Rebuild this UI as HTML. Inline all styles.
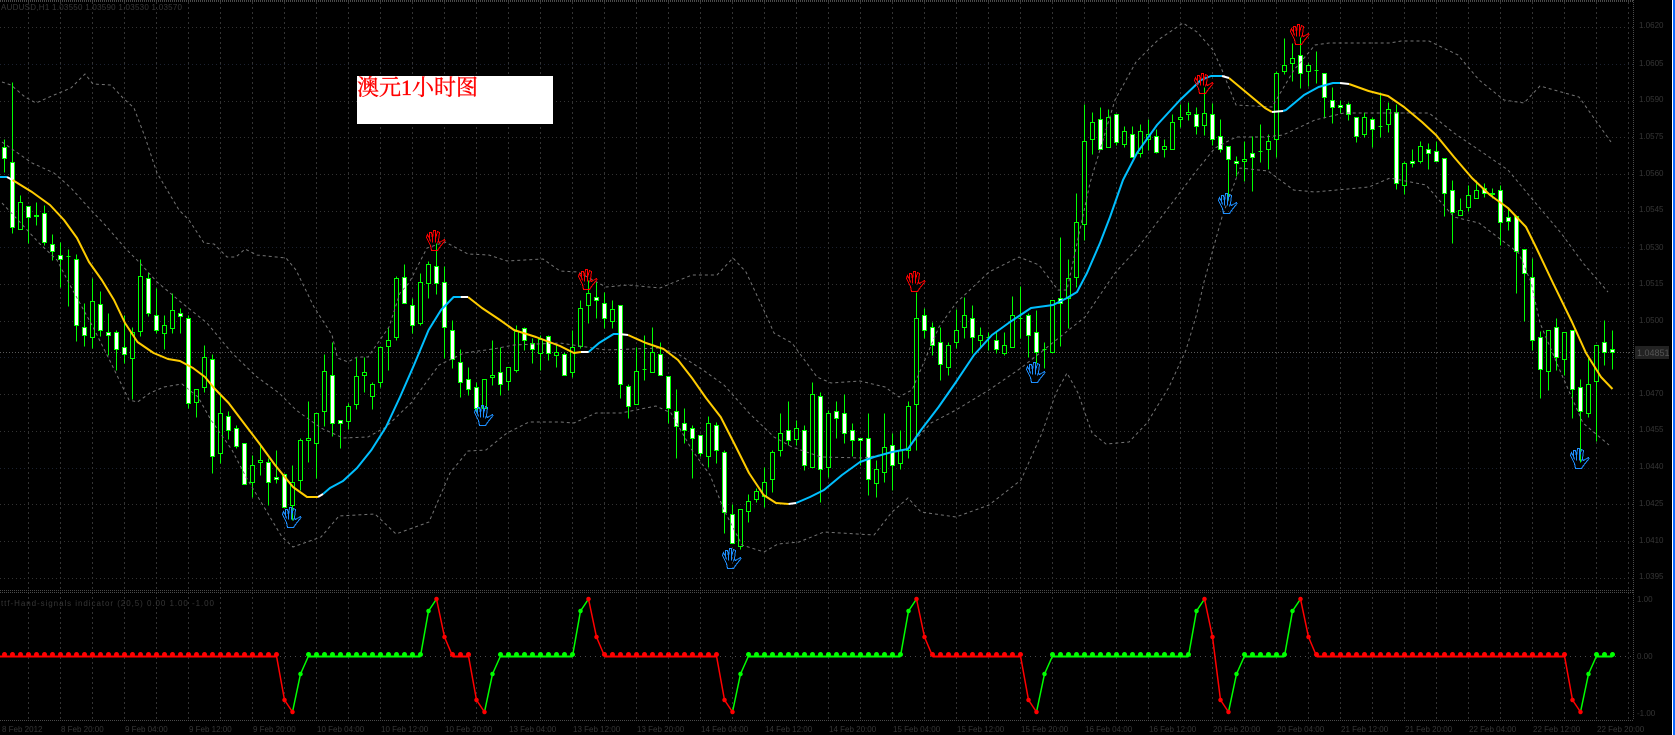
<!DOCTYPE html>
<html lang="zh">
<head>
<meta charset="utf-8">
<title>澳元1小时图</title>
<style>
html,body{margin:0;padding:0;background:#000;width:1675px;height:735px;overflow:hidden}
svg{position:absolute;left:0;top:0;display:block}
.t{font-family:"Liberation Sans",sans-serif;font-size:8px;fill:#363636}
#box{position:absolute;left:357px;top:76px;width:196px;height:48px;background:#fff;color:#f00;font-family:"Liberation Serif","Noto Serif CJK SC",serif;font-size:22px;line-height:24px;white-space:nowrap;padding-left:0;-webkit-text-stroke:.35px #f00}
#edge{position:absolute;left:1672px;top:0;width:1px;height:735px;background:#fff}
#edge2{position:absolute;left:1673px;top:0;width:2px;height:735px;background:#0f6cff}
</style>
</head>
<body>
<svg width="1675" height="735" viewBox="0 0 1675 735" xmlns="http://www.w3.org/2000/svg">
<defs>
<g id="hand" fill="none" stroke-width="1" stroke-linejoin="miter">
<path d="M5.5 20.5L4.5 15.5L.5 7.5L1.5 4.5L3.5 8.5L3.5 2.5L5.5 2.5L6.5 8.5L7.5 .5L9.5 .5L9.5 8.5L11.5 1.5L13.5 2.5L12.5 10.5L13.5 12.5L18.5 9.5L19 10.5L13.5 17.5L11.5 20.5Z"/>
<path d="M3.5 8.5L4.5 11.5M6.5 8.5L6.5 12.5M9.5 8.5L9.5 12.5M12.5 10.5L11.5 13.5"/>
</g>
</defs>

<!-- grid -->
<g stroke="#333333" stroke-width="1" fill="none" stroke-dasharray="1 3" shape-rendering="crispEdges">
<path d="M0 27.5H1633M0 101.5H1633M0 137.5H1633M0 174.5H1633M0 211.5H1633M0 284.5H1633M0 321.5H1633M0 394.5H1633M0 431.5H1633M0 504.5H1633M0 541.5H1633M0 578.5H1633"/>
<path stroke="#1c2230" d="M0 64.5H1633M0 247.5H1633M0 468.5H1633M0 357.5H1633"/>
</g>
<g stroke="#333333" stroke-width="1" fill="none" stroke-dasharray="2 3" shape-rendering="crispEdges">
<path d="M28.5 2V720M60.5 2V720M92.5 2V720M124.5 2V720M156.5 2V720M188.5 2V720M220.5 2V720M252.5 2V720M284.5 2V720M316.5 2V720M348.5 2V720M380.5 2V720M412.5 2V720M444.5 2V720M476.5 2V720M508.5 2V720M540.5 2V720M572.5 2V720M604.5 2V720M636.5 2V720M668.5 2V720M700.5 2V720M732.5 2V720M764.5 2V720M796.5 2V720M828.5 2V720M860.5 2V720M892.5 2V720M924.5 2V720M956.5 2V720M988.5 2V720M1020.5 2V720M1052.5 2V720M1084.5 2V720M1116.5 2V720M1148.5 2V720M1180.5 2V720M1212.5 2V720M1244.5 2V720M1276.5 2V720M1308.5 2V720M1340.5 2V720M1372.5 2V720M1404.5 2V720M1436.5 2V720M1468.5 2V720M1500.5 2V720M1532.5 2V720M1564.5 2V720M1596.5 2V720M1628.5 2V720"/>
</g>
<g stroke="#4a4a4a" stroke-width="1" fill="none" stroke-dasharray="1 1" shape-rendering="crispEdges">
<path d="M0 .5H1633M0 1.5H1633M0 590.5H1633M0 592.5H1633M0 720.5H1633M1633.5 0V720"/>
</g>
<path d="M0 352.5H1633" stroke="#5a5a5a" stroke-width="1" stroke-dasharray="1 2" shape-rendering="crispEdges"/>
<path d="M0 656.5H1633" stroke="#4a4a4a" stroke-width="1" stroke-dasharray="1 4" shape-rendering="crispEdges"/>

<!-- candles -->
<g transform="translate(0,.5)" shape-rendering="crispEdges" stroke="#00ff00" stroke-width="1">
<path fill="none" d="M4.5 139V172M12.5 82V233M20.5 195V229M28.5 206V243M36.5 202V225M44.5 205V245M52.5 234V260M60.5 242V287M68.5 249V306M76.5 254V341M84.5 303V346M92.5 278V348M100.5 291V336M108.5 313V355M116.5 330V370M124.5 315V363M132.5 327V399M140.5 259V336M148.5 272V316M156.5 288V333M164.5 315V349M172.5 293V333M180.5 308V333M188.5 315V408M196.5 389V417M204.5 345V392M212.5 354V473M220.5 395V463M228.5 411V439M236.5 425V448M244.5 443V484M252.5 455V497M260.5 443V475M268.5 458V505M276.5 450V483M284.5 474V507M292.5 465V520M300.5 438V490M308.5 401V462M316.5 413V478M324.5 354V426M332.5 342V436M340.5 420V448M348.5 403V429M356.5 357V409M364.5 357V392M372.5 382V409M380.5 346V387M388.5 327V370M396.5 276V340M404.5 264V303M412.5 298V333M420.5 273V325M428.5 261V298M436.5 243V294M444.5 266V358M452.5 320V368M460.5 349V397M468.5 367V395M476.5 382V412M484.5 379V410M492.5 340V385M500.5 347V395M508.5 367V390M516.5 325V372M524.5 327V350M532.5 338V363M540.5 335V370M548.5 335V360M556.5 345V367M564.5 352V375M572.5 330V377M580.5 300V348M588.5 280V323M596.5 282V318M604.5 292V328M612.5 300V328M620.5 305V398M628.5 384V418M636.5 347V404M644.5 335V380M652.5 327V372M660.5 342V375M668.5 376V423M676.5 389V458M684.5 408V443M692.5 425V478M700.5 435V456M708.5 416V467M716.5 422V463M724.5 450V533M732.5 504V543M740.5 509V549M748.5 494V522M756.5 488V502M764.5 467V507M772.5 450V492M780.5 413V456M788.5 401V445M796.5 420V445M804.5 425V470M812.5 382V467M820.5 392V502M828.5 410V477M836.5 401V438M844.5 394V443M852.5 423V456M860.5 438V465M868.5 413V495M876.5 460V497M884.5 413V482M892.5 433V490M900.5 430V469M908.5 401V458M916.5 292V450M924.5 308V338M932.5 322V355M940.5 327V380M948.5 342V375M956.5 309V348M964.5 297V338M972.5 305V353M980.5 327V347M988.5 332V350M996.5 332V353M1004.5 332V355M1012.5 296V347M1020.5 286V338M1028.5 313V357M1036.5 310V363M1044.5 342V368M1052.5 300V352M1060.5 237V346M1068.5 259V328M1076.5 193V287M1084.5 104V240M1092.5 112V154M1100.5 107V149M1108.5 109V147M1116.5 114V145M1124.5 126V147M1132.5 126V157M1140.5 124V157M1148.5 119V150M1156.5 129V153M1164.5 139V157M1172.5 114V149M1180.5 104V127M1188.5 102V120M1196.5 107V134M1204.5 87V135M1212.5 103V145M1220.5 119V152M1228.5 146V200M1236.5 156V176M1244.5 141V181M1252.5 136V191M1260.5 124V162M1268.5 134V169M1276.5 71V157M1284.5 38V74M1292.5 43V81M1300.5 37V88M1308.5 63V86M1316.5 51V83M1324.5 73V118M1332.5 87V123M1340.5 100V113M1348.5 102V120M1356.5 117V142M1364.5 112V137M1372.5 117V147M1380.5 92V137M1388.5 102V132M1396.5 104V189M1404.5 161V194M1412.5 149V167M1420.5 141V163M1428.5 143V169M1436.5 141V161M1444.5 158V216M1452.5 180V243M1460.5 198V215M1468.5 185V211M1476.5 180V198M1484.5 183V197M1492.5 188V198M1500.5 185V245M1508.5 208V230M1516.5 216V293M1524.5 249V321M1532.5 258V350M1540.5 331V398M1548.5 330V390M1556.5 318V370M1564.5 332V375M1572.5 330V418M1580.5 379V462M1588.5 358V417M1596.5 345V441M1604.5 320V365M1612.5 330V369"/>
<path fill="#000" d="M18.5 202h4V229h-4zM34.5 215h4V216h-4zM66.5 256h4V256h-4zM90.5 301h4V337h-4zM130.5 332h4V358h-4zM138.5 276h4V331h-4zM162.5 325h4V333h-4zM170.5 310h4V328h-4zM194.5 389h4V402h-4zM202.5 357h4V387h-4zM218.5 413h4V453h-4zM250.5 465h4V482h-4zM258.5 460h4V462h-4zM290.5 482h4V505h-4zM298.5 440h4V480h-4zM306.5 438h4V440h-4zM314.5 413h4V443h-4zM322.5 371h4V411h-4zM346.5 406h4V421h-4zM354.5 376h4V404h-4zM362.5 372h4V375h-4zM370.5 384h4V396h-4zM378.5 347h4V382h-4zM386.5 340h4V346h-4zM394.5 278h4V337h-4zM418.5 282h4V323h-4zM426.5 264h4V283h-4zM482.5 379h4V408h-4zM490.5 375h4V377h-4zM506.5 367h4V381h-4zM514.5 331h4V370h-4zM538.5 339h4V353h-4zM554.5 352h4V355h-4zM570.5 347h4V372h-4zM578.5 308h4V346h-4zM586.5 293h4V305h-4zM610.5 309h4V321h-4zM634.5 371h4V404h-4zM642.5 369h4V369h-4zM650.5 352h4V372h-4zM706.5 423h4V456h-4zM738.5 509h4V546h-4zM746.5 501h4V511h-4zM754.5 491h4V499h-4zM762.5 482h4V496h-4zM770.5 452h4V479h-4zM778.5 433h4V450h-4zM794.5 428h4V439h-4zM810.5 394h4V467h-4zM826.5 413h4V467h-4zM874.5 469h4V483h-4zM882.5 447h4V472h-4zM898.5 450h4V463h-4zM906.5 406h4V450h-4zM914.5 318h4V404h-4zM946.5 345h4V367h-4zM954.5 330h4V342h-4zM962.5 315h4V327h-4zM978.5 335h4V340h-4zM986.5 337h4V337h-4zM1002.5 345h4V353h-4zM1010.5 315h4V347h-4zM1018.5 318h4V318h-4zM1042.5 349h4V349h-4zM1050.5 300h4V352h-4zM1066.5 278h4V298h-4zM1074.5 222h4V277h-4zM1082.5 141h4V224h-4zM1090.5 122h4V139h-4zM1106.5 117h4V147h-4zM1122.5 131h4V144h-4zM1138.5 131h4V153h-4zM1146.5 134h4V139h-4zM1162.5 146h4V149h-4zM1170.5 122h4V149h-4zM1178.5 117h4V119h-4zM1186.5 112h4V114h-4zM1202.5 113h4V125h-4zM1242.5 159h4V161h-4zM1258.5 151h4V151h-4zM1266.5 141h4V149h-4zM1274.5 73h4V139h-4zM1282.5 65h4V71h-4zM1290.5 58h4V63h-4zM1306.5 65h4V71h-4zM1314.5 70h4V70h-4zM1362.5 117h4V134h-4zM1378.5 126h4V126h-4zM1386.5 109h4V124h-4zM1402.5 163h4V185h-4zM1418.5 146h4V161h-4zM1458.5 210h4V215h-4zM1466.5 195h4V207h-4zM1474.5 190h4V198h-4zM1490.5 193h4V194h-4zM1546.5 330h4V371h-4zM1562.5 332h4V359h-4zM1586.5 384h4V413h-4zM1594.5 345h4V381h-4z"/>
<path fill="#fff" d="M2.5 147h4V158h-4zM10.5 162h4V227h-4zM26.5 206h4V217h-4zM42.5 213h4V242h-4zM50.5 244h4V251h-4zM58.5 255h4V259h-4zM74.5 259h4V325h-4zM82.5 327h4V335h-4zM98.5 304h4V330h-4zM106.5 332h4V335h-4zM114.5 332h4V349h-4zM122.5 347h4V354h-4zM146.5 278h4V313h-4zM154.5 315h4V330h-4zM178.5 313h4V316h-4zM186.5 318h4V403h-4zM210.5 359h4V456h-4zM226.5 416h4V430h-4zM234.5 428h4V446h-4zM242.5 443h4V484h-4zM266.5 462h4V482h-4zM274.5 477h4V479h-4zM282.5 474h4V507h-4zM330.5 375h4V423h-4zM338.5 420h4V423h-4zM402.5 277h4V303h-4zM410.5 305h4V325h-4zM434.5 266h4V283h-4zM442.5 282h4V327h-4zM450.5 330h4V359h-4zM458.5 362h4V382h-4zM466.5 379h4V389h-4zM474.5 387h4V408h-4zM498.5 372h4V384h-4zM522.5 328h4V340h-4zM530.5 343h4V349h-4zM546.5 336h4V353h-4zM562.5 354h4V375h-4zM594.5 297h4V300h-4zM602.5 303h4V318h-4zM618.5 305h4V384h-4zM626.5 386h4V406h-4zM658.5 354h4V375h-4zM666.5 376h4V408h-4zM674.5 411h4V426h-4zM682.5 423h4V430h-4zM690.5 428h4V438h-4zM698.5 435h4V453h-4zM714.5 425h4V450h-4zM722.5 452h4V512h-4zM730.5 514h4V543h-4zM786.5 430h4V440h-4zM802.5 430h4V465h-4zM818.5 396h4V469h-4zM834.5 411h4V418h-4zM842.5 413h4V433h-4zM850.5 430h4V440h-4zM858.5 438h4V440h-4zM866.5 438h4V479h-4zM890.5 445h4V465h-4zM922.5 315h4V330h-4zM930.5 327h4V345h-4zM938.5 342h4V364h-4zM970.5 318h4V337h-4zM994.5 340h4V349h-4zM1026.5 315h4V335h-4zM1034.5 332h4V352h-4zM1058.5 298h4V303h-4zM1098.5 119h4V149h-4zM1114.5 114h4V142h-4zM1130.5 134h4V157h-4zM1154.5 136h4V152h-4zM1194.5 114h4V126h-4zM1210.5 114h4V139h-4zM1218.5 136h4V149h-4zM1226.5 146h4V159h-4zM1234.5 161h4V163h-4zM1250.5 153h4V157h-4zM1298.5 55h4V73h-4zM1322.5 73h4V97h-4zM1330.5 100h4V107h-4zM1338.5 105h4V107h-4zM1346.5 104h4V114h-4zM1354.5 117h4V136h-4zM1370.5 119h4V129h-4zM1394.5 112h4V183h-4zM1410.5 161h4V163h-4zM1426.5 149h4V153h-4zM1434.5 151h4V161h-4zM1442.5 158h4V193h-4zM1450.5 190h4V212h-4zM1482.5 188h4V193h-4zM1498.5 190h4V222h-4zM1506.5 217h4V221h-4zM1514.5 216h4V251h-4zM1522.5 249h4V273h-4zM1530.5 277h4V340h-4zM1538.5 337h4V369h-4zM1554.5 327h4V357h-4zM1570.5 330h4V389h-4zM1578.5 387h4V411h-4zM1602.5 342h4V352h-4zM1610.5 349h4V352h-4z"/>
</g>

<!-- Bollinger bands -->
<g fill="none" stroke="#747474" stroke-width="1" stroke-dasharray="3 3">
<polyline points="2,82 11,85 25,97 36,103 54,95 71,88 85,74 93,84 111,85 123,98 134,108 145,137 157,173 179,210 189,220 204,243 214,244 227,257 236,257 245,249 257,255 286,258 296,270 314,307 332,335 337.5,358 348,362 357,357 368,357 389,327 400,293 409,283 427,248 445,242 468,254 489,255 507,261 543,259 560,271 578,272 606,287 628,285 660,288 692,275 717,275 733,258 746,272 767,317 774,333 792,343 817,377 831,383 860,381 885,387 899,397 912,390 939,327 956,303 989,272 1019,257 1039,265 1058,290 1067,290 1090,183 1115,100 1136,62 1158,40 1183,23 1197,32 1213,50 1222,70 1236,105 1272,107 1294,70 1315,45 1329,43 1390,43 1401,41 1429,41 1458,55 1479,80 1504,100 1524,103 1540,86 1579,97 1611,142"/>
<polyline points="2,142 32,163 54,173 71,188 89,208 107,227 125,248 139,262 157,282 182,303 207,323 232,353 257,377 279,393 296,410 321,428 343,438 368,437 386,427 411,403 439,365 464,353 493,349 514,345 560,343 606,350 660,348 678,354 703,370 724,385 749,413 774,437 792,447 821,457 864,458 906,450 931,423 956,410 989,390 1021,368 1060,337 1085,317 1115,273 1136,250 1169,207 1197,170 1215,148 1236,137 1265,137 1283,135 1315,120 1344,113 1394,113 1429,113 1454,133 1479,150 1508,170 1533,200 1561,233 1583,263 1608,292"/>
<polyline points="2,203 18,220 39,243 57,260 71,287 93,327 111,363 129,400 137.5,402 150,393 164,387 182,384 198,397 211,420 232,450 246,477 264,507 282,537 293,547 321,537 339,516 375,514 396,534 429,522 450,473 468,451 486,450 507,433 529,422 560,422 574,423 596,413 621,413 656,406 671,413 692,450 710,475 724,510 742,545 764,552 778,544 799,542 824,532 874,535 892,512 908,498 921,512 956,517 989,505 1021,480 1042,433 1056,393 1067,373 1078,393 1092,433 1106,444 1129,442 1147,423 1169,387 1186,350 1197,313 1204,282 1222,217 1240,168 1268,171 1293.6,190 1315,192 1369,187 1390,178 1426,185 1454,217 1479,223 1518.6,253 1531,282 1540,323 1561,373 1583,423 1609,445"/>
</g>

<!-- MA line -->
<g fill="none" stroke-width="2" stroke-linejoin="round">
<g stroke="#00bfff">
<polyline points="0,177 7,177"/>
<polyline points="323,494 330,488 343,481 357,468 371.4,450 386,427 400,397 414,365 428.6,330 441,310 453.6,297 460.7,297"/>
<polyline points="588.6,352 599,343 613.6,334 619,334"/>
<polyline points="796,503 810,497 824,490 842,475 860,462 874,457 892,452 908,449 921,430 938.6,407 956,382 974,355 992,335 1010,322 1031,308 1053,305 1067,298 1077,292 1087,273 1100,243 1110,217 1123,180 1137,153 1157,125 1180,100 1201,80 1211,76 1222,76"/>
<polyline points="1283,111 1286,110 1304,95 1318.6,87 1333,83 1340,83"/>
</g>
<g stroke="#ffcc00">
<polyline points="12.5,180 32,192 50,205 64,220 77,238 89,262 101.8,280 114,300 125,323 137.5,342 153.6,353 168,359 180,361 193,368 205,377 214,388 228.6,403 243,422 259,443 275,465 293,487 307,497 318,497"/>
<polyline points="468,297 482,308 500,320 514,330 536,337 560,346 574,353 581,352"/>
<polyline points="628,335 646,343 663.6,349 678,360 692,378 706,398 720.7,417 735,445 749,473 763.6,495 776,503 788.6,504"/>
<polyline points="1229,78 1247,93 1265,108 1272,112"/>
<polyline points="1349,84 1368.6,91 1388,96 1404,107 1422,122 1436,135 1454,157 1472,178 1490,195 1508,208 1526,227 1536.4,248 1552.5,282 1572,322 1586,353 1601,377 1612.5,389"/>
</g>
<g stroke="#ffffff">
<polyline points="7,177 12.5,180"/><polyline points="318,497 323,494"/><polyline points="460.7,297 468,297"/><polyline points="581,352 588.6,352"/><polyline points="619,334 628,335"/><polyline points="788.6,504 796,503"/><polyline points="1222,76 1229,78"/><polyline points="1272,112 1283,111"/><polyline points="1340,83 1349,84"/>
</g>
</g>

<!-- hands -->
<g shape-rendering="crispEdges" stroke="#ff0000">
<use href="#hand" x="426" y="230"/><use href="#hand" x="578" y="269"/><use href="#hand" x="906" y="271"/><use href="#hand" x="1194" y="73"/><use href="#hand" x="1290" y="24"/>
</g>
<g shape-rendering="crispEdges" stroke="#1e8fff">
<use href="#hand" x="282" y="507"/><use href="#hand" x="474" y="405"/><use href="#hand" x="722" y="548"/><use href="#hand" x="1026" y="362"/><use href="#hand" x="1218" y="193"/><use href="#hand" x="1570" y="448"/>
</g>

<!-- sub-window indicator -->
<g fill="none" stroke-width="1.5" stroke-linejoin="round">
<path stroke="#ff0000" stroke-width="2" d="M0 656.5H276.5M452.5 656.5H468.5M604.5 656.5H716.5M932.5 656.5H1020.5M1316.5 656.5H1564.5"/>
<path stroke="#00ff00" stroke-width="2" d="M308.5 656.5H420.5M500.5 656.5H572.5M748.5 656.5H900.5M1052.5 656.5H1188.5M1244.5 656.5H1284.5M1596.5 656.5H1612.5"/>
<path stroke="#ff0000" d="M276.5 656L284.5 700L292.5 712M436.5 599L444.5 637L452.5 656M468.5 656L476.5 700L484.5 712M588.5 599L596.5 637L604.5 656M716.5 656L724.5 700L732.5 712M916.5 599L924.5 637L932.5 656M1020.5 656L1028.5 700L1036.5 712M1204.5 599L1212.5 637L1220.5 700L1228.5 712M1300.5 599L1308.5 637L1316.5 656M1564.5 656L1572.5 700L1580.5 712"/>
<path stroke="#00ff00" d="M292.5 712L300.5 674L308.5 656M420.5 656L428.5 611L436.5 599M484.5 712L492.5 674L500.5 656M572.5 656L580.5 611L588.5 599M732.5 712L740.5 674L748.5 656M900.5 656L908.5 611L916.5 599M1036.5 712L1044.5 674L1052.5 656M1188.5 656L1196.5 611L1204.5 599M1228.5 712L1236.5 674L1244.5 656M1284.5 656L1292.5 611L1300.5 599M1580.5 712L1588.5 674L1596.5 656"/>
</g>
<g fill="none" stroke-width="5" stroke-linecap="round">
<path stroke="#ff0000" stroke-dasharray="0 8" d="M4.5 654.5H277M452.5 654.5H469M604.5 654.5H717M932.5 654.5H1021M1316.5 654.5H1565"/>
<path stroke="#00ff00" stroke-dasharray="0 8" d="M308.5 654.5H421M500.5 654.5H573M748.5 654.5H901M1052.5 654.5H1189M1244.5 654.5H1285M1596.5 654.5H1613"/>
<path stroke="#ff0000" stroke-width="4.5" d="M284.5 700h0M292.5 712h0M436.5 599h0M444.5 637h0M476.5 700h0M484.5 712h0M588.5 599h0M596.5 637h0M724.5 700h0M732.5 712h0M916.5 599h0M924.5 637h0M1028.5 700h0M1036.5 712h0M1204.5 599h0M1212.5 637h0M1220.5 700h0M1228.5 712h0M1300.5 599h0M1308.5 637h0M1572.5 700h0M1580.5 712h0"/>
<path stroke="#00ff00" stroke-width="4.5" d="M300.5 674h0M428.5 611h0M492.5 674h0M580.5 611h0M740.5 674h0M908.5 611h0M1044.5 674h0M1196.5 611h0M1236.5 674h0M1292.5 611h0M1588.5 674h0"/>
</g>

<!-- text -->
<text class="t" x="1" y="10" textLength="181">AUDUSD,H1 1.03550 1.03590 1.03530 1.03570</text>
<text class="t" x="1" y="606" textLength="213">ttf-Hand-signals indicator (20,5) 0.00 1.00 -1.00</text>
<g class="t">
<text class="t" x="1639" y="28">1.0620</text><text class="t" x="1639" y="66">1.0605</text><text class="t" x="1639" y="102">1.0590</text><text class="t" x="1639" y="139">1.0575</text><text class="t" x="1639" y="176">1.0560</text><text class="t" x="1639" y="212">1.0545</text><text class="t" x="1639" y="250">1.0530</text><text class="t" x="1639" y="286">1.0515</text><text class="t" x="1639" y="323">1.0500</text><text class="t" x="1639" y="396">1.0470</text><text class="t" x="1639" y="432">1.0455</text><text class="t" x="1639" y="469">1.0440</text><text class="t" x="1639" y="506">1.0425</text><text class="t" x="1639" y="543">1.0410</text><text class="t" x="1639" y="579">1.0395</text>
<rect x="1635" y="346" width="34" height="13" fill="#222222"/>
<text class="t" x="1637" y="356" style="fill:#555555;font-size:9px">1.04851</text>
<text class="t" x="1637" y="602">1.00</text><text class="t" x="1637" y="659">0.00</text><text class="t" x="1637" y="716">-1.00</text>
<text class="t" x="2" y="732">8 Feb 2012</text><text class="t" x="61" y="732">8 Feb 20:00</text><text class="t" x="125" y="732">9 Feb 04:00</text><text class="t" x="189" y="732">9 Feb 12:00</text><text class="t" x="253" y="732">9 Feb 20:00</text><text class="t" x="317" y="732">10 Feb 04:00</text><text class="t" x="381" y="732">10 Feb 12:00</text><text class="t" x="445" y="732">10 Feb 20:00</text><text class="t" x="509" y="732">13 Feb 04:00</text><text class="t" x="573" y="732">13 Feb 12:00</text><text class="t" x="637" y="732">13 Feb 20:00</text><text class="t" x="701" y="732">14 Feb 04:00</text><text class="t" x="765" y="732">14 Feb 12:00</text><text class="t" x="829" y="732">14 Feb 20:00</text><text class="t" x="893" y="732">15 Feb 04:00</text><text class="t" x="957" y="732">15 Feb 12:00</text><text class="t" x="1021" y="732">15 Feb 20:00</text><text class="t" x="1085" y="732">16 Feb 04:00</text><text class="t" x="1149" y="732">16 Feb 12:00</text><text class="t" x="1213" y="732">20 Feb 20:00</text><text class="t" x="1277" y="732">20 Feb 04:00</text><text class="t" x="1341" y="732">21 Feb 12:00</text><text class="t" x="1405" y="732">21 Feb 20:00</text><text class="t" x="1469" y="732">22 Feb 04:00</text><text class="t" x="1533" y="732">22 Feb 12:00</text><text class="t" x="1597" y="732">22 Feb 20:00</text>
</g>
</svg>
<div id="box">澳元1小时图</div>
<div id="edge"></div>
<div id="edge2"></div>
</body>
</html>
